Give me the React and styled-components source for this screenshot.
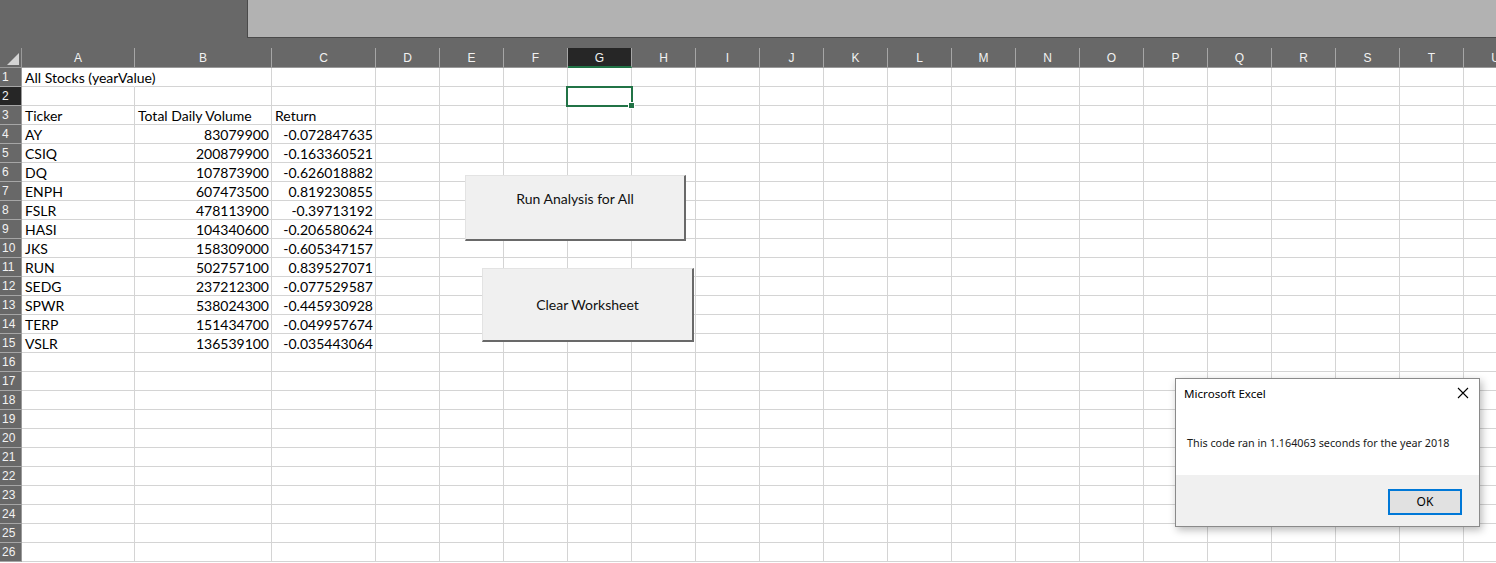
import React from "react";
import styled, { createGlobalStyle } from "styled-components";

const GlobalStyle = createGlobalStyle`
  html, body {
    margin: 0;
    padding: 0;
    background: #ffffff;
    overflow: hidden;
  }
  body {
    font-family: "Lato", "Liberation Sans", sans-serif;
  }
`;

const COLS = [
  { name: "A", width: 113 },
  { name: "B", width: 137 },
  { name: "C", width: 104 },
  ..."DEFGHIJKLMNOPQRSTU".split("").map((c) => ({ name: c, width: 64 })),
];

const SELECTED_COL = "G";
const SELECTED_ROW = 2;

const stocks = [
  ["AY", "83079900", "-0.072847635"],
  ["CSIQ", "200879900", "-0.163360521"],
  ["DQ", "107873900", "-0.626018882"],
  ["ENPH", "607473500", "0.819230855"],
  ["FSLR", "478113900", "-0.39713192"],
  ["HASI", "104340600", "-0.206580624"],
  ["JKS", "158309000", "-0.605347157"],
  ["RUN", "502757100", "0.839527071"],
  ["SEDG", "237212300", "-0.077529587"],
  ["SPWR", "538024300", "-0.445930928"],
  ["TERP", "151434700", "-0.049957674"],
  ["VSLR", "136539100", "-0.035443064"],
];

// rows as [A, B, C]
const rows = [
  [{ text: "All Stocks (yearValue)", overflow: true }, null, null],
  [null, null, null],
  [{ text: "Ticker" }, { text: "Total Daily Volume" }, { text: "Return" }],
  ...stocks.map(([t, v, r]) => [
    { text: t },
    { text: v, right: true },
    { text: r, right: true },
  ]),
];
while (rows.length < 26) rows.push([null, null, null]);

const Page = styled.div`
  width: 1496px;
  height: 563px;
  display: flex;
  flex-direction: column;
  background: #686868;
  overflow: hidden;
`;

const TopBar = styled.div`
  height: 38px;
  display: flex;
  flex-shrink: 0;
`;

const TopLeft = styled.div`
  width: 247px;
  background: #686868;
`;

const TopPanel = styled.div`
  flex: 1;
  background: #b2b2b2;
  border-left: 1px solid #4a4a4a;
  border-bottom: 1px solid #4a4a4a;
`;

const Strip = styled.div`
  height: 10px;
  flex-shrink: 0;
  background: #686868;
`;

const SheetArea = styled.div`
  position: relative;
  flex: 1;
  background: #ffffff;
`;

const Grid = styled.div`
  display: grid;
  grid-template-columns: 22px ${COLS.map((c) => `${c.width}px`).join(" ")};
  grid-template-rows: 20px repeat(26, 19px);
`;

const Corner = styled.div`
  background: #686868;
  position: relative;
  border-right: 1px solid #9a9a9a;
  border-bottom: 1px solid #9a9a9a;
  box-sizing: border-box;

  &::after {
    content: "";
    position: absolute;
    right: 2px;
    bottom: 2px;
    width: 0;
    height: 0;
    border-left: 12px solid transparent;
    border-bottom: 12px solid #d4d4d4;
  }
`;

const ColHead = styled.div`
  box-sizing: border-box;
  background: ${(p) => (p.$active ? "#262626" : "#686868")};
  color: #f2f2f2;
  font-family: "Liberation Sans", Arial, sans-serif;
  font-size: 12px;
  display: flex;
  align-items: center;
  justify-content: center;
  padding-top: 1px;
  border-right: 1px solid #a6a6a6;
  border-bottom: ${(p) => (p.$active ? "2px solid #217346" : "1px solid #9a9a9a")};
`;

const RowHead = styled.div`
  box-sizing: border-box;
  background: ${(p) => (p.$active ? "#262626" : "#686868")};
  color: #f2f2f2;
  font-family: "Liberation Sans", Arial, sans-serif;
  font-size: 12px;
  display: flex;
  align-items: center;
  padding-left: 2px;
  border-bottom: 1px solid #a6a6a6;
  border-right: 1px solid #9a9a9a;
`;

const Cell = styled.div`
  box-sizing: border-box;
  position: relative;
  border-right: ${(p) => (p.$open ? "1px solid transparent" : "1px solid #d4d4d4")};
  border-bottom: 1px solid #d4d4d4;
  font-size: 14px;
  color: #000;
  line-height: 19px;
  padding: 0 2px 0 3px;
  white-space: nowrap;
  overflow: ${(p) => (p.$open || p.$selected ? "visible" : "hidden")};
  text-align: ${(p) => (p.$right ? "right" : "left")};
  z-index: ${(p) => (p.$selected ? 2 : p.$open ? 1 : 0)};
`;

const Selection = styled.div`
  position: absolute;
  left: -2px;
  top: -1px;
  right: -2px;
  bottom: -2px;
  border: 2px solid #217346;
  pointer-events: none;

  &::after {
    content: "";
    position: absolute;
    right: -4px;
    bottom: -4px;
    width: 5px;
    height: 5px;
    background: #217346;
    border: 1px solid #fff;
  }
`;

const SheetButton = styled.div`
  position: absolute;
  left: ${(p) => p.$x}px;
  top: ${(p) => p.$y}px;
  width: ${(p) => p.$w}px;
  height: ${(p) => p.$h}px;
  box-sizing: border-box;
  background: #f0f0f0;
  border-top: 1px solid #e3e3e3;
  border-left: 1px solid #e3e3e3;
  border-right: 2px solid #696969;
  border-bottom: 2px solid #696969;
  display: flex;
  justify-content: center;
  align-items: ${(p) => (p.$top ? "flex-start" : "center")};
  padding-top: ${(p) => (p.$top ? "14px" : "0")};
  font-size: 14px;
  color: #111;
  z-index: 3;
`;

const Dialog = styled.div`
  position: absolute;
  left: 1175px;
  top: 330px;
  width: 305px;
  height: 149px;
  box-sizing: border-box;
  background: #ffffff;
  border: 1px solid #8a8a8a;
  box-shadow: 2px 3px 8px rgba(0, 0, 0, 0.28);
  display: flex;
  flex-direction: column;
  font-family: "Noto Sans", "Open Sans", sans-serif;
  z-index: 5;
`;

const TitleBar = styled.div`
  height: 28px;
  display: flex;
  align-items: center;
  justify-content: space-between;
  padding: 0 10px 0 8px;
  font-size: 11.6px;
  color: #000;
`;

const CloseIcon = styled.svg`
  width: 12px;
  height: 12px;
`;

const DialogBody = styled.div`
  flex: 1;
  display: flex;
  align-items: center;
  padding: 2px 0 0 11px;
  font-size: 10.8px;
  color: #1a1a1a;
`;

const DialogFooter = styled.div`
  height: 51px;
  background: #f0f0f0;
  display: flex;
  justify-content: flex-end;
  align-items: center;
  padding: 0 17px 0 0;
`;

const OkButton = styled.div`
  width: 74px;
  height: 26px;
  box-sizing: border-box;
  background: #e1e1e1;
  border: 2px solid #0078d7;
  display: flex;
  align-items: center;
  justify-content: center;
  font-size: 12px;
  color: #000;
  margin-top: 2px;
`;

export default function App() {
  return (
    <>
      <GlobalStyle />
      <Page>
        <TopBar>
          <TopLeft />
          <TopPanel />
        </TopBar>
        <Strip />
        <SheetArea>
          <Grid>
            <Corner />
            {COLS.map((c) => (
              <ColHead key={c.name} $active={c.name === SELECTED_COL}>
                {c.name}
              </ColHead>
            ))}
            {rows.map((r, i) => {
              const rowNum = i + 1;
              return (
                <React.Fragment key={rowNum}>
                  <RowHead $active={rowNum === SELECTED_ROW}>{rowNum}</RowHead>
                  {COLS.map((c, ci) => {
                    const data = ci < 3 ? r[ci] : null;
                    const selected = c.name === SELECTED_COL && rowNum === SELECTED_ROW;
                    return (
                      <Cell
                        key={c.name}
                        $right={data && data.right}
                        $open={data && data.overflow}
                        $selected={selected}
                      >
                        {data ? data.text : ""}
                        {selected && <Selection />}
                      </Cell>
                    );
                  })}
                </React.Fragment>
              );
            })}
          </Grid>

          <SheetButton $x={465} $y={127} $w={221} $h={66} $top>
            Run Analysis for All
          </SheetButton>
          <SheetButton $x={482} $y={220} $w={212} $h={74}>
            Clear Worksheet
          </SheetButton>

          <Dialog>
            <TitleBar>
              <span>Microsoft Excel</span>
              <CloseIcon viewBox="0 0 12 12">
                <path d="M1 1 L11 11 M11 1 L1 11" stroke="#000" strokeWidth="1.1" fill="none" />
              </CloseIcon>
            </TitleBar>
            <DialogBody>This code ran in 1.164063 seconds for the year 2018</DialogBody>
            <DialogFooter>
              <OkButton>OK</OkButton>
            </DialogFooter>
          </Dialog>
        </SheetArea>
      </Page>
    </>
  );
}
